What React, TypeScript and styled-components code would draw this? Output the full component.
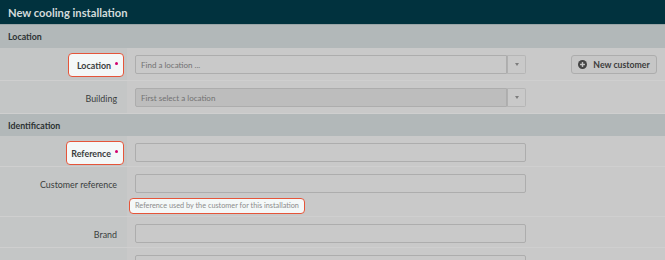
import React from 'react';
import styled, { createGlobalStyle } from 'styled-components';

const GlobalStyle = createGlobalStyle`
  html, body {
    margin: 0;
    padding: 0;
    background: #c9c9c9;
    font-family: Lato, "Open Sans", "Liberation Sans", sans-serif;
    overflow: hidden;
  }
`;

const Page = styled.div`
  width: 665px;
  height: 260px;
  overflow: hidden;
  background: #c9c9c9;
`;

const Header = styled.div`
  height: 25px;
  background: #01323e;
  color: #d3dbdb;
  font-weight: 700;
  font-size: 11.2px;
  display: flex;
  align-items: center;
  padding-left: 8px;
  border-bottom: 1px solid #9aa5a7;
  box-sizing: border-box;
`;

const SectionTitle = styled.div<{ $h: number }>`
  height: ${p => p.$h}px;
  background: #b2b8b9;
  color: #2c3233;
  font-weight: 700;
  font-size: 8.8px;
  display: flex;
  align-items: center;
  padding-left: 8px;
`;

const Row = styled.div<{ $h: number }>`
  display: grid;
  grid-template-columns: 127px 1fr;
  height: ${p => p.$h}px;
  border-bottom: 1px solid #cfcfcf;
  box-sizing: border-box;
`;

const LabelCell = styled.div`
  background: #c4c6c6;
  display: flex;
  justify-content: flex-end;
  align-items: flex-start;
  padding: 5px 3px 0 0;
`;

const Label = styled.div<{ $hl?: boolean }>`
  font-size: 8.9px;
  color: #3a3d3d;
  font-weight: ${p => (p.$hl ? 700 : 400)};
  min-width: ${p => (p.$hl ? '56px' : 'auto')};
  height: 24px;
  display: flex;
  align-items: center;
  justify-content: flex-end;
  padding: ${p => (p.$hl ? '0 5px 0 4px' : '0 6px')};
  box-sizing: border-box;
  border-radius: 4px;
  background: ${p => (p.$hl ? '#f4f8f8' : 'transparent')};
  border: 1.5px solid ${p => (p.$hl ? '#e5553a' : 'transparent')};
`;

const Star = styled.span`
  width: 3px;
  height: 3px;
  border-radius: 50%;
  background: #d1006e;
  margin: 0 0 3px 4px;
`;

const FieldCell = styled.div`
  display: flex;
  flex-direction: column;
  padding: 7px 0 0 8px;
`;

const FieldLine = styled.div`
  display: flex;
  align-items: center;
`;

const Input = styled.div<{ $disabled?: boolean }>`
  width: 391px;
  height: 19px;
  box-sizing: border-box;
  border: 1px solid #adadad;
  border-radius: 2px;
  background: ${p => (p.$disabled ? '#bdbdbd' : '#c9c9c9')};
  color: #727272;
  font-size: 8px;
  display: flex;
  align-items: center;
  padding-left: 5px;
`;

const Select = styled.div`
  width: 391px;
  height: 19px;
  display: flex;
  box-sizing: border-box;
`;

const SelectBox = styled(Input)`
  flex: 1;
  width: auto;
  border-radius: 2px 0 0 2px;
`;

const Caret = styled.div`
  width: 19px;
  border: 1px solid #b6b6b6;
  border-left: 1px solid #b0b0b0;
  border-radius: 0 2px 2px 0;
  box-sizing: border-box;
  display: flex;
  align-items: center;
  justify-content: center;
  &::after {
    content: '';
    border-left: 2.5px solid transparent;
    border-right: 2.5px solid transparent;
    border-top: 3px solid #7c7c7c;
  }
`;

const Button = styled.div`
  margin-left: 45px;
  width: 86px;
  height: 19px;
  box-sizing: border-box;
  border: 1px solid #adadad;
  border-radius: 3px;
  background: #c6c6c6;
  color: #3c3c3c;
  font-size: 8.7px;
  font-weight: 700;
  display: flex;
  align-items: center;
  justify-content: center;
  gap: 6px;
`;

const Hint = styled.div`
  margin: 5px 0 0 -6px;
  align-self: flex-start;
  font-size: 7.3px;
  color: #8c8c8c;
  background: #f4f8f8;
  border: 1.5px solid #e5553a;
  border-radius: 4px;
  padding: 2px 5px 3px;
`;

const PlusIcon = () => (
  <svg width="9" height="9" viewBox="0 0 10 10">
    <circle cx="5" cy="5" r="5" fill="#444" />
    <rect x="2.3" y="4.2" width="5.4" height="1.6" fill="#c6c6c6" />
    <rect x="4.2" y="2.3" width="1.6" height="5.4" fill="#c6c6c6" />
  </svg>
);

export default function App() {
  return (
    <Page>
      <GlobalStyle />
      <Header>New cooling installation</Header>
      <SectionTitle $h={23}>Location</SectionTitle>
      <Row $h={33}>
        <LabelCell>
          <Label $hl>Location<Star /></Label>
        </LabelCell>
        <FieldCell>
          <FieldLine>
            <Select>
              <SelectBox>Find a location ...</SelectBox>
              <Caret />
            </Select>
            <Button><PlusIcon />New customer</Button>
          </FieldLine>
        </FieldCell>
      </Row>
      <Row $h={33}>
        <LabelCell>
          <Label>Building</Label>
        </LabelCell>
        <FieldCell>
          <Select>
            <SelectBox $disabled>First select a location</SelectBox>
            <Caret />
          </Select>
        </FieldCell>
      </Row>
      <SectionTitle $h={22}>Identification</SectionTitle>
      <Row $h={31}>
        <LabelCell>
          <Label $hl>Reference<Star /></Label>
        </LabelCell>
        <FieldCell>
          <Input />
        </FieldCell>
      </Row>
      <Row $h={50}>
        <LabelCell>
          <Label>Customer reference</Label>
        </LabelCell>
        <FieldCell>
          <Input />
          <Hint>Reference used by the customer for this installation</Hint>
        </FieldCell>
      </Row>
      <Row $h={31}>
        <LabelCell>
          <Label>Brand</Label>
        </LabelCell>
        <FieldCell>
          <Input />
        </FieldCell>
      </Row>
      <Row $h={32}>
        <LabelCell />
        <FieldCell>
          <Input />
        </FieldCell>
      </Row>
    </Page>
  );
}
